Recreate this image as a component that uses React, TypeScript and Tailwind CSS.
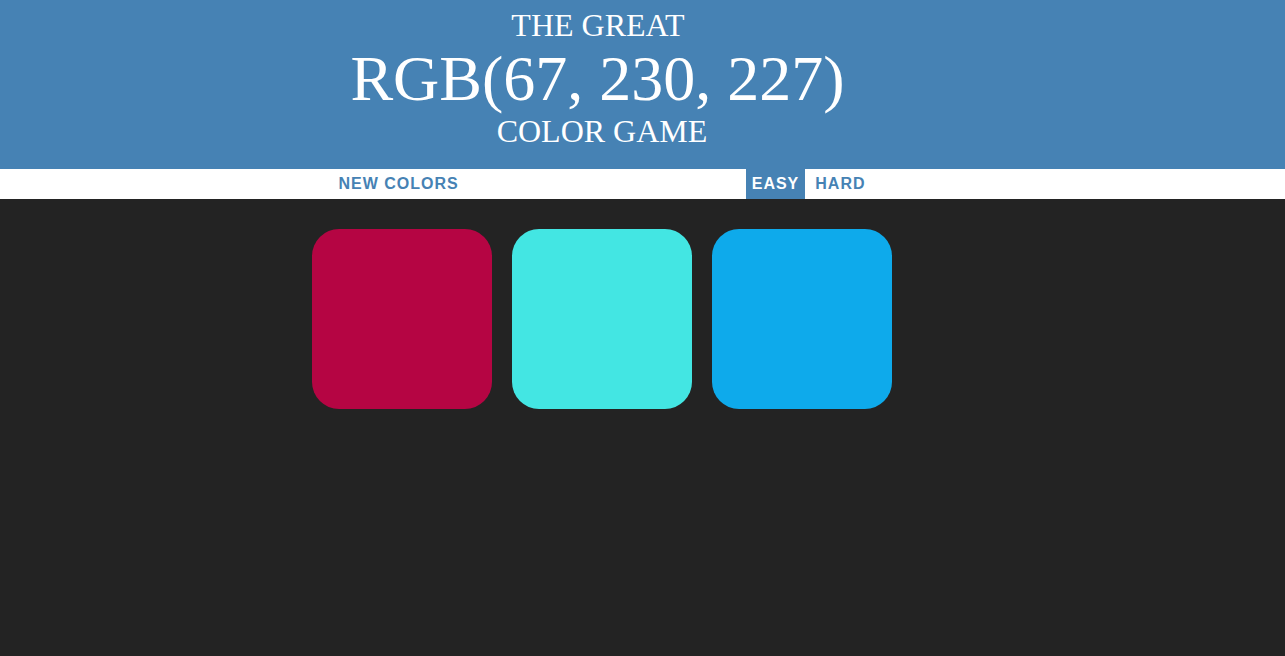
const squares = ["#b50543", "#43e6e3", "#0eaaeb"];

export default function App() {
  return (
    <div className="min-h-screen w-full bg-[#232323]">
      {/* header */}
      <header className="w-full bg-[#4682b4] text-white font-['Liberation_Serif',serif]">
        <div className="w-[1204px] flex flex-col items-center pt-[8px] pb-[21px] text-center uppercase font-normal">
          <div className="text-[32px] leading-[35px] pr-[8px]">The Great</div>
          <div className="text-[64px] leading-[71px] pr-[9px]">RGB(67, 230, 227)</div>
          <div className="text-[32px] leading-[34px]">Color Game</div>
        </div>
      </header>

      {/* stripe */}
      <div className="w-full bg-white h-[30px]">
        <div className="w-[1204px] h-full flex justify-center gap-[4px] font-['Liberation_Sans',Arial,sans-serif] text-[16px] font-bold uppercase tracking-[1px]">
          <button className="h-full px-[6px] text-[#4682b4] uppercase">New Colors</button>
          <span className="w-[273px]"></span>
          <button className="h-full px-[6px] bg-[#4682b4] text-white uppercase">Easy</button>
          <button className="h-full px-[6px] text-[#4682b4] uppercase">Hard</button>
        </div>
      </div>

      {/* squares */}
      <div className="w-[1204px]">
        <div className="w-[600px] mx-auto mt-[20px] flex">
          {squares.map((c) => (
            <div
              key={c}
              className="w-[180px] h-[180px] m-[10px] rounded-[27px]"
              style={{ backgroundColor: c }}
            />
          ))}
        </div>
      </div>
    </div>
  );
}
